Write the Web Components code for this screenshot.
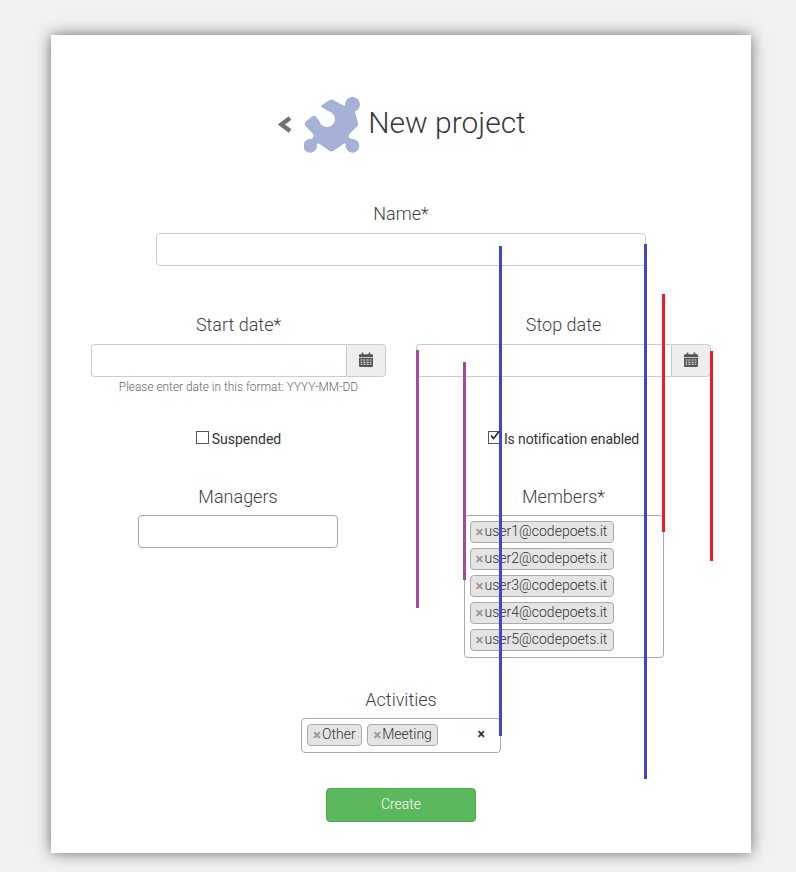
<!DOCTYPE html>
<html lang="en">
<head>
<meta charset="utf-8">
<title>New project</title>
<style>
html, body { margin: 0; background: #f1f1f1; }
body { font-family: Roboto, "Liberation Sans", sans-serif; color: #333; }
</style>
</head>
<body>
<project-page>
  <page-header title="New project"></page-header>

  <form-field label="Name*" style="--field-width: 490px; --label-gap: 7px">
    <text-box></text-box>
  </form-field>

  <form-row style="margin-top: 46px">
    <form-field label="Start date*" style="--label-gap: 7px">
      <date-box hint="Please enter date in this format: YYYY-MM-DD"></date-box>
    </form-field>
    <form-field label="Stop date" style="--label-gap: 7px">
      <date-box></date-box>
    </form-field>
  </form-row>

  <form-row style="margin-top: 52px">
    <check-option label="Suspended"></check-option>
    <check-option label="Is notification enabled" checked style="--track: -.12px"></check-option>
  </form-row>

  <form-row style="margin-top: 35px">
    <form-field label="Managers" style="--field-width: 200px; margin-left: -1px">
      <text-box class="dark"></text-box>
    </form-field>
    <form-field label="Members*" style="--field-width: 200px">
      <tag-select stacked>
        <tag-chip>user1@codepoets.it</tag-chip>
        <tag-chip>user2@codepoets.it</tag-chip>
        <tag-chip>user3@codepoets.it</tag-chip>
        <tag-chip>user4@codepoets.it</tag-chip>
        <tag-chip>user5@codepoets.it</tag-chip>
      </tag-select>
    </form-field>
  </form-row>

  <form-field label="Activities" style="--field-width: 200px; margin-top: 29px">
    <tag-select clearable>
      <tag-chip>Other</tag-chip>
      <tag-chip>Meeting</tag-chip>
    </tag-select>
  </form-field>

  <submit-button>Create</submit-button>

  <mark-line slot="marks" x="499" y="246" h="490" color="#3f48cc"></mark-line>
  <mark-line slot="marks" x="644" y="244" h="535" color="#3f48cc"></mark-line>
  <mark-line slot="marks" x="662" y="294" h="238" color="#ed1c24"></mark-line>
  <mark-line slot="marks" x="710" y="351" h="210" color="#ed1c24"></mark-line>
  <mark-line slot="marks" x="416" y="350" h="258" color="#a349a4"></mark-line>
  <mark-line slot="marks" x="463" y="362" h="218" color="#a349a4"></mark-line>
</project-page>

<script>
// Small helper, every element gets an open shadow root with its own styles.
function shadow (el, html) {
  el.attachShadow({ mode: 'open' }).innerHTML = html
}

customElements.define('project-page', class extends HTMLElement {
  connectedCallback () {
    shadow(this, `
<style>
:host { display: block; position: relative; width: 796px; height: 872px; overflow: hidden; }
#card {
  box-sizing: border-box;
  width: 700px;
  height: 818px;
  margin: 35px 0 0 51px;
  padding: 0 25px;
  background: #fff;
  box-shadow: 0 0 14px rgba(0, 0, 0, .55);
  display: flex;
  flex-direction: column;
  align-items: center;
}
</style>
<div id="card"><slot></slot></div>
<slot name="marks"></slot>`)
  }
})

customElements.define('page-header', class extends HTMLElement {
  connectedCallback () {
    shadow(this, `
<style>
:host { display: flex; align-items: center; height: 56px; margin: 62px 0 48px; }
h1 { margin: 0 0 5px 8px; font: 300 30px/40px Roboto, sans-serif; color: #3a3a3a; }
.back { margin: 0 11px 0 1px; }
</style>
<svg class="back" width="16" height="20" viewBox="0 0 16 20"><path d="M13 3 L4.500 9.500 L13 16" fill="none" stroke="#737373" stroke-width="4.500"/></svg>
<svg width="56" height="56" viewBox="0 0 55 55">
  <path fill="#a5b1d6" d="M24.500 3.500 Q27 1.500 29.500 3.500 L40.500 9 A7.300 7.300 0 1 1 50 14.300 L52.500 24 Q54 26.500 52.500 28.500 L44 37 Q43.500 41 47.500 41.300 A6.700 6.700 0 1 1 41 47 Q41 45 39 46 L29.500 52.500 Q27 54.500 24.500 52.500 L15 46 Q13 45 12.700 47 A6.700 6.700 0 1 1 6 41.300 Q9.500 41 9.500 37 L1.500 28.500 Q0 26.500 1.500 24.500 L8 19 Q10 17.500 12 19.500 L15 23.500 A7.800 7.800 0 1 0 24 14 L17.500 10 Q16 8.500 18 7.500 Z"/>
</svg>
<h1>${this.getAttribute('title')}</h1>`)
  }
})

customElements.define('form-row', class extends HTMLElement {
  connectedCallback () {
    shadow(this, `
<style>
:host { display: grid; grid-template-columns: 325px 325px; width: 650px; }
::slotted(*) { justify-self: center; }
</style>
<slot></slot>`)
  }
})

customElements.define('form-field', class extends HTMLElement {
  connectedCallback () {
    shadow(this, `
<style>
:host { display: flex; flex-direction: column; align-items: center; width: var(--field-width, 295px); }
label { font: 300 18px/25px Roboto, sans-serif; color: #3f3f3f; margin-bottom: var(--label-gap, 6px); }
.body { width: 100%; }
</style>
<label>${this.getAttribute('label')}</label>
<div class="body"><slot></slot></div>`)
  }
})

customElements.define('text-box', class extends HTMLElement {
  connectedCallback () {
    shadow(this, `
<style>
:host { display: block; }
input {
  display: block; box-sizing: border-box; width: 100%; height: 33px;
  border: 1px solid #ccc; border-radius: 4px; background: #fff; outline: 0;
}
:host(.dark) input { border-color: #aaa; }
</style>
<input type="text">`)
  }
})

customElements.define('date-box', class extends HTMLElement {
  connectedCallback () {
    const hint = this.getAttribute('hint')
    shadow(this, `
<style>
:host { display: block; height: 33px; }
.group { display: flex; height: 33px; }
input {
  box-sizing: border-box; flex: 1; min-width: 0; height: 33px;
  border: 1px solid #ccc; border-right: 0; border-radius: 4px 0 0 4px; outline: 0;
}
.addon {
  box-sizing: border-box; width: 40px; border: 1px solid #ccc; border-radius: 0 4px 4px 0;
  background: #eee; display: flex; align-items: center; justify-content: center;
}
.addon svg { margin: -3px 0 0 -1px; }
p { margin: 3px 0 0; text-align: center; font: 300 11.900px/14px Roboto, sans-serif; color: #666; white-space: nowrap; }
</style>
<div class="group">
  <input type="text">
  <span class="addon">
    <svg width="14" height="15" viewBox="0 0 13 14" preserveAspectRatio="none">
      <path fill="#555" d="M0 3 Q0 2 1 2 H2.500 V0.500 H4 V2 H9 V0.500 H10.500 V2 H12 Q13 2 13 3 V5 H0 Z"/>
      <path fill="#555" fill-rule="evenodd" d="M0 5.500 H13 V13 Q13 14 12 14 H1 Q0 14 0 13 Z M1.500 7 V8 H3 V7 Z M4 7 V8 H6 V7 Z M7 7 V8 H9 V7 Z M10 7 V8 H11.500 V7 Z M1.500 9 V10 H3 V9 Z M4 9 V10 H6 V9 Z M7 9 V10 H9 V9 Z M10 9 V10 H11.500 V9 Z M1.500 11 V12 H3 V11 Z M4 11 V12 H6 V11 Z M7 11 V12 H9 V11 Z M10 11 V12 H11.500 V11 Z"/>
    </svg>
  </span>
</div>
${hint ? `<p>${hint}</p>` : ''}`)
  }
})

customElements.define('check-option', class extends HTMLElement {
  connectedCallback () {
    const checked = this.hasAttribute('checked')
    shadow(this, `
<style>
:host { display: inline-flex; align-items: center; height: 20px; font: 400 14px/20px Roboto, sans-serif; color: #333; letter-spacing: var(--track, 0); }
.box { position: relative; display: block; width: 13px; height: 13px; margin: -4px 3px 0 0; }
input { appearance: none; display: block; box-sizing: border-box; width: 13px; height: 13px; margin: 0; border: 1px solid #555; background: #fff; }
svg { position: absolute; left: 1px; top: -1px; }
</style>
<label style="display: contents">
  <span class="box">
    <input type="checkbox" ${checked ? 'checked' : ''}>
    ${checked ? '<svg width="12" height="11" viewBox="0 0 12 11"><path d="M2 5.500 L4.500 8.500 L10 1.500" fill="none" stroke="#222" stroke-width="1.500"/></svg>' : ''}
  </span>
  <span>${this.getAttribute('label')}</span>
</label>`)
  }
})

customElements.define('tag-select', class extends HTMLElement {
  connectedCallback () {
    const clear = this.hasAttribute('clearable')
    shadow(this, `
<style>
:host { display: block; position: relative; box-sizing: border-box; width: 100%; border: 1px solid #aaa; border-radius: 4px; background: #fff; }
.tags { display: flex; flex-wrap: wrap; gap: 5px; padding: 5px; min-height: 23px; }
:host([stacked]) .tags { flex-direction: column; align-items: flex-start; padding-bottom: 6px; }
.clear { position: absolute; right: 15px; top: 6px; font: 700 14px/18px Roboto, sans-serif; color: #333; }
</style>
<div class="tags"><slot></slot></div>
${clear ? '<span class="clear">×</span>' : ''}`)
  }
})

customElements.define('tag-chip', class extends HTMLElement {
  connectedCallback () {
    shadow(this, `
<style>
:host {
  display: inline-flex; align-items: center; box-sizing: border-box; height: 22px; padding: 0 5.500px 2px 4px;
  border: 1px solid #aaa; border-radius: 4px; background: #e4e4e4;
  font: 300 14px/18px Roboto, sans-serif; color: #333; white-space: nowrap;
}
span { width: 10px; text-align: center; color: #999; font-weight: 700; font-size: 15px; position: relative; top: 1px; }
</style>
<span>×</span><slot></slot>`)
  }
})

customElements.define('submit-button', class extends HTMLElement {
  connectedCallback () {
    shadow(this, `
<style>
:host { display: block; margin-top: 35px; }
button {
  display: block; box-sizing: border-box; width: 150px; height: 34px; padding: 0 0 2px;
  border: 1px solid #4cae4c; border-radius: 4px; background: #5cb85c; color: #fff;
  font: 300 14px/20px Roboto, sans-serif;
}
</style>
<button type="submit"><slot></slot></button>`)
  }
})

// Hand drawn marker strokes lying over the form.
customElements.define('mark-line', class extends HTMLElement {
  connectedCallback () {
    shadow(this, `
<style>
:host { display: block; position: absolute; width: 3px; }
</style>`)
    this.style.left = this.getAttribute('x') + 'px'
    this.style.top = this.getAttribute('y') + 'px'
    this.style.height = this.getAttribute('h') + 'px'
    this.style.background = this.getAttribute('color')
  }
})
</script>
</body>
</html>
